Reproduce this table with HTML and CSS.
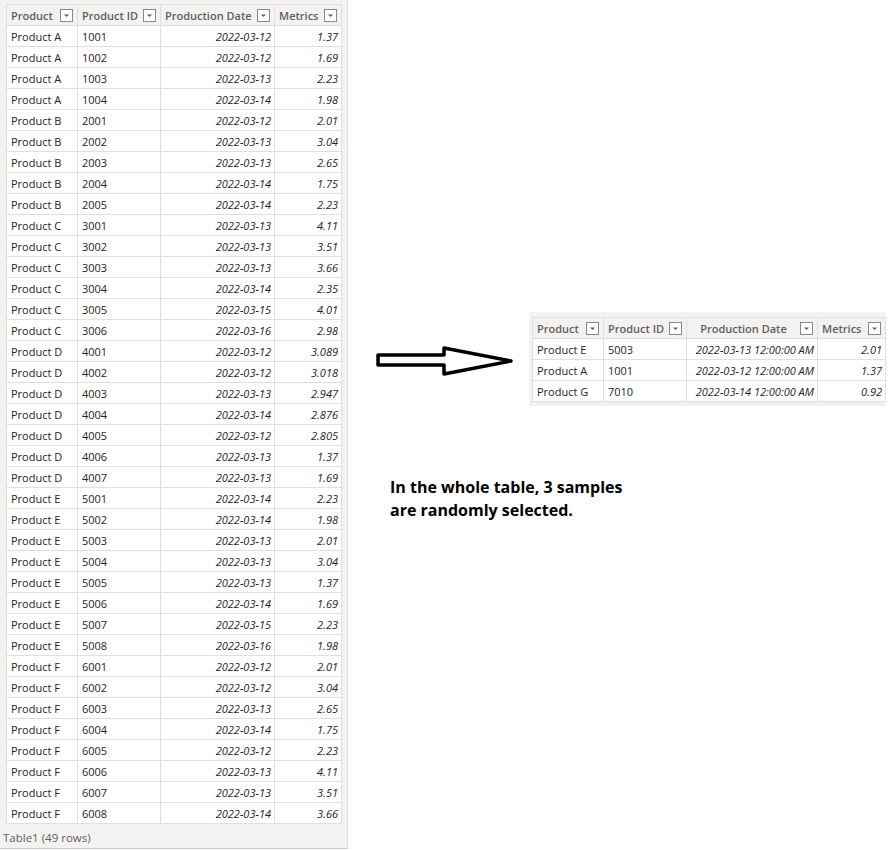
FILE: index.html
```html
<!DOCTYPE html>
<html>
<head>
<meta charset="utf-8">
<link rel="stylesheet" href="styles.css">
</head>
<body>
<div class="page">
  <div class="left-panel">
    <div class="top-strip"></div>
    <table class="grid big">
      <thead>
        <tr>
          <th class="c-prod"><div class="hd"><span>Product</span><svg class="dd" viewBox="0 0 13 13"><rect x="0.5" y="0.5" width="12" height="12" fill="#fff" stroke="#8a8886"/><path d="M4 5.5h5l-2.5 2.5z" fill="#605e5c"/></svg></div></th>
          <th class="c-id"><div class="hd"><span>Product ID</span><svg class="dd" viewBox="0 0 13 13"><rect x="0.5" y="0.5" width="12" height="12" fill="#fff" stroke="#8a8886"/><path d="M4 5.5h5l-2.5 2.5z" fill="#605e5c"/></svg></div></th>
          <th class="c-date"><div class="hd"><span>Production Date</span><svg class="dd" viewBox="0 0 13 13"><rect x="0.5" y="0.5" width="12" height="12" fill="#fff" stroke="#8a8886"/><path d="M4 5.5h5l-2.5 2.5z" fill="#605e5c"/></svg></div></th>
          <th class="c-met"><div class="hd"><span>Metrics</span><svg class="dd" viewBox="0 0 13 13"><rect x="0.5" y="0.5" width="12" height="12" fill="#fff" stroke="#8a8886"/><path d="M4 5.5h5l-2.5 2.5z" fill="#605e5c"/></svg></div></th>
        </tr>
      </thead>
      <tbody>
        <tr><td>Product A</td><td>1001</td><td class="num">2022-03-12</td><td class="num">1.37</td></tr>
        <tr><td>Product A</td><td>1002</td><td class="num">2022-03-12</td><td class="num">1.69</td></tr>
        <tr><td>Product A</td><td>1003</td><td class="num">2022-03-13</td><td class="num">2.23</td></tr>
        <tr><td>Product A</td><td>1004</td><td class="num">2022-03-14</td><td class="num">1.98</td></tr>
        <tr><td>Product B</td><td>2001</td><td class="num">2022-03-12</td><td class="num">2.01</td></tr>
        <tr><td>Product B</td><td>2002</td><td class="num">2022-03-13</td><td class="num">3.04</td></tr>
        <tr><td>Product B</td><td>2003</td><td class="num">2022-03-13</td><td class="num">2.65</td></tr>
        <tr><td>Product B</td><td>2004</td><td class="num">2022-03-14</td><td class="num">1.75</td></tr>
        <tr><td>Product B</td><td>2005</td><td class="num">2022-03-14</td><td class="num">2.23</td></tr>
        <tr><td>Product C</td><td>3001</td><td class="num">2022-03-13</td><td class="num">4.11</td></tr>
        <tr><td>Product C</td><td>3002</td><td class="num">2022-03-13</td><td class="num">3.51</td></tr>
        <tr><td>Product C</td><td>3003</td><td class="num">2022-03-13</td><td class="num">3.66</td></tr>
        <tr><td>Product C</td><td>3004</td><td class="num">2022-03-14</td><td class="num">2.35</td></tr>
        <tr><td>Product C</td><td>3005</td><td class="num">2022-03-15</td><td class="num">4.01</td></tr>
        <tr><td>Product C</td><td>3006</td><td class="num">2022-03-16</td><td class="num">2.98</td></tr>
        <tr><td>Product D</td><td>4001</td><td class="num">2022-03-12</td><td class="num">3.089</td></tr>
        <tr><td>Product D</td><td>4002</td><td class="num">2022-03-12</td><td class="num">3.018</td></tr>
        <tr><td>Product D</td><td>4003</td><td class="num">2022-03-13</td><td class="num">2.947</td></tr>
        <tr><td>Product D</td><td>4004</td><td class="num">2022-03-14</td><td class="num">2.876</td></tr>
        <tr><td>Product D</td><td>4005</td><td class="num">2022-03-12</td><td class="num">2.805</td></tr>
        <tr><td>Product D</td><td>4006</td><td class="num">2022-03-13</td><td class="num">1.37</td></tr>
        <tr><td>Product D</td><td>4007</td><td class="num">2022-03-13</td><td class="num">1.69</td></tr>
        <tr><td>Product E</td><td>5001</td><td class="num">2022-03-14</td><td class="num">2.23</td></tr>
        <tr><td>Product E</td><td>5002</td><td class="num">2022-03-14</td><td class="num">1.98</td></tr>
        <tr><td>Product E</td><td>5003</td><td class="num">2022-03-13</td><td class="num">2.01</td></tr>
        <tr><td>Product E</td><td>5004</td><td class="num">2022-03-13</td><td class="num">3.04</td></tr>
        <tr><td>Product E</td><td>5005</td><td class="num">2022-03-13</td><td class="num">1.37</td></tr>
        <tr><td>Product E</td><td>5006</td><td class="num">2022-03-14</td><td class="num">1.69</td></tr>
        <tr><td>Product E</td><td>5007</td><td class="num">2022-03-15</td><td class="num">2.23</td></tr>
        <tr><td>Product E</td><td>5008</td><td class="num">2022-03-16</td><td class="num">1.98</td></tr>
        <tr><td>Product F</td><td>6001</td><td class="num">2022-03-12</td><td class="num">2.01</td></tr>
        <tr><td>Product F</td><td>6002</td><td class="num">2022-03-12</td><td class="num">3.04</td></tr>
        <tr><td>Product F</td><td>6003</td><td class="num">2022-03-13</td><td class="num">2.65</td></tr>
        <tr><td>Product F</td><td>6004</td><td class="num">2022-03-14</td><td class="num">1.75</td></tr>
        <tr><td>Product F</td><td>6005</td><td class="num">2022-03-12</td><td class="num">2.23</td></tr>
        <tr><td>Product F</td><td>6006</td><td class="num">2022-03-13</td><td class="num">4.11</td></tr>
        <tr><td>Product F</td><td>6007</td><td class="num">2022-03-13</td><td class="num">3.51</td></tr>
        <tr><td>Product F</td><td>6008</td><td class="num">2022-03-14</td><td class="num">3.66</td></tr>
      </tbody>
    </table>
    <div class="status">Table1 (49 rows)</div>
  </div>

  <div class="right-area">
    <div class="sample-row">
      <svg class="arrow" viewBox="0 0 140 32" width="140" height="32">
        <path d="M2 9 H68 V2 L135 15 L68 28 V19 H2 Z" fill="#fff" stroke="#000" stroke-width="3.5" stroke-linejoin="round"/>
      </svg>
      <div class="sample-panel">
        <table class="grid small">
          <thead>
            <tr>
              <th class="s-prod"><div class="hd"><span>Product</span><svg class="dd" viewBox="0 0 13 13"><rect x="0.5" y="0.5" width="12" height="12" fill="#fff" stroke="#8a8886"/><path d="M4 5.5h5l-2.5 2.5z" fill="#605e5c"/></svg></div></th>
              <th class="s-id"><div class="hd"><span>Product ID</span><svg class="dd" viewBox="0 0 13 13"><rect x="0.5" y="0.5" width="12" height="12" fill="#fff" stroke="#8a8886"/><path d="M4 5.5h5l-2.5 2.5z" fill="#605e5c"/></svg></div></th>
              <th class="s-date"><div class="hd center"><span>Production Date</span><svg class="dd" viewBox="0 0 13 13"><rect x="0.5" y="0.5" width="12" height="12" fill="#fff" stroke="#8a8886"/><path d="M4 5.5h5l-2.5 2.5z" fill="#605e5c"/></svg></div></th>
              <th class="s-met"><div class="hd"><span>Metrics</span><svg class="dd" viewBox="0 0 13 13"><rect x="0.5" y="0.5" width="12" height="12" fill="#fff" stroke="#8a8886"/><path d="M4 5.5h5l-2.5 2.5z" fill="#605e5c"/></svg></div></th>
            </tr>
          </thead>
          <tbody>
            <tr><td>Product E</td><td>5003</td><td class="num">2022-03-13 12:00:00 AM</td><td class="num">2.01</td></tr>
            <tr><td>Product A</td><td>1001</td><td class="num">2022-03-12 12:00:00 AM</td><td class="num">1.37</td></tr>
            <tr><td>Product G</td><td>7010</td><td class="num">2022-03-14 12:00:00 AM</td><td class="num">0.92</td></tr>
          </tbody>
        </table>
      </div>
    </div>
    <p class="caption">In the whole table, 3 samples<br>are randomly selected.</p>
  </div>
</div>
</body>
</html>
```

FILE: styles.css
```css
* { box-sizing: border-box; }
html, body { margin: 0; padding: 0; background: #fff; }
body {
  font-family: "Open Sans", "Noto Sans", sans-serif;
  font-size: 11px;
  color: #252423;
}
.page {
  display: flex;
  align-items: flex-start;
  width: 895px;
  height: 850px;
}
.left-panel {
  width: 348px;
  height: 849px;
  background: #f3f2f1;
  border-bottom: 1px solid #c8c6c4;
  display: flex;
  flex-direction: column;
  flex-shrink: 0;
  border-right: 1px solid #e1dfdd;
}
.top-strip {
  height: 4px;
  flex-shrink: 0;
}
.grid {
  border-collapse: collapse;
  background: #fff;
  table-layout: fixed;
}
.grid.big { margin-left: 6px; width: 335px; }
.grid th, .grid td {
  border: 1px solid #e1dfdd;
  height: 21px;
  padding: 0 4px;
  white-space: nowrap;
  overflow: hidden;
  font-weight: normal;
  text-align: left;
}
.grid th {
  background: #f3f2f1;
  color: #605e5c;
  font-weight: 600;
}
.grid td.num {
  text-align: right;
  font-style: italic;
  padding-right: 3px;
}
.hd {
  display: flex;
  align-items: center;
  justify-content: space-between;
  gap: 4px;
}
.hd.center span { flex: 1; text-align: center; }
.dd { width: 13px; height: 13px; flex-shrink: 0; display: block; }

.c-prod { width: 71px; }
.c-id { width: 83px; }
.c-date { width: 114px; }
.c-met { width: 67px; }

.status {
  margin-top: auto;
  padding: 0 0 2px 3px;
  font-size: 11.5px;
  color: #605e5c;
  line-height: 16px;
}

.right-area {
  flex: 1;
  display: flex;
  flex-direction: column;
}
.sample-row {
  display: flex;
  align-items: flex-start;
  margin-top: 312px;
}
.arrow {
  display: block;
  margin-left: 28px;
  margin-top: 34px;
  flex-shrink: 0;
}
.sample-panel {
  margin-left: 13px;
  width: 356px;
  background: #f3f2f1;
  padding: 5px 0 4px 3px;
}
.grid.small { width: 353px; }
.s-prod { width: 71px; }
.s-id { width: 83px; }
.s-date { width: 131px; }
.s-met { width: 68px; }

.caption {
  margin: 70px 0 0 42px;
  font-family: "Open Sans", sans-serif;
  font-weight: 700;
  font-size: 16px;
  line-height: 23px;
  color: #000;
}
```
